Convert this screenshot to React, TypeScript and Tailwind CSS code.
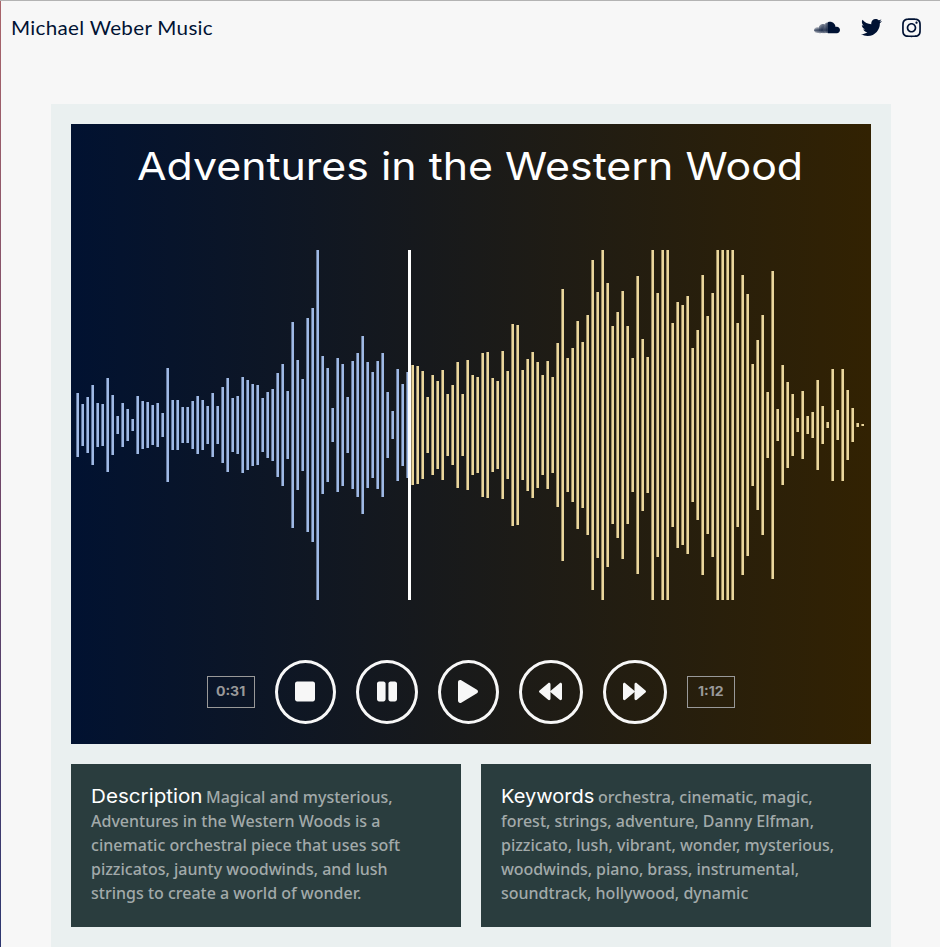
import React from "react";
import {
  FaBackward,
  FaForward,
  FaInstagram,
  FaPause,
  FaPlay,
  FaSoundcloud,
  FaStop,
  FaTwitter,
} from "react-icons/fa";

// Half-height of each bar, in pixels, measured from the centre line.
const peaks = [
  32, 21, 28, 40, 22, 21, 47, 30, 9, 22, 16, 6, 29, 24, 23, 20, 22, 12, 57, 25,
  25, 18, 18, 24, 29, 25, 19, 32, 19, 38, 47, 27, 29, 48, 45, 41, 40, 27, 33,
  36, 52, 61, 34, 103, 65, 46, 107, 117, 175, 69, 57, 17, 67, 61, 28, 64, 72,
  89, 63, 53, 64, 72, 33, 14, 56, 41, 53, 60, 59, 54, 28, 50, 44, 55, 31, 40,
  63, 31, 65, 50, 48, 72, 73, 47, 44, 74, 54, 101, 100, 55, 66, 73, 63, 50, 64,
  48, 82, 136, 67, 77, 104, 83, 110, 165, 133, 175, 142, 99, 113, 134, 99, 67,
  149, 86, 68, 175, 132, 175, 175, 102, 123, 120, 129, 77, 95, 150, 109, 132,
  175, 175, 175, 175, 102, 150, 131, 61, 85, 110, 33, 154, 16, 60, 43, 31, 7,
  34, 9, 13, 45, 19, 3, 56, 15, 56, 35, 17, 2, 1,
];
const PLAYED = 67;

function Waveform() {
  return (
    <svg className="block" width="800" height="350" viewBox="0 0 800 350">
      {peaks.map((p, i) => (
        <rect
          key={i}
          x={5.4 + i * 5}
          y={175 - p}
          width={2.6}
          height={p * 2}
          fill={i < PLAYED ? "#9fb9e5" : "#ead69c"}
        />
      ))}
      <rect x="337" y="0" width="3" height="350" fill="#ffffff" />
    </svg>
  );
}

function Control({ label, width, children }: { label: string; width: string; children: React.ReactNode }) {
  return (
    <button
      aria-label={label}
      className={`flex h-16 items-center justify-center rounded-[50%] border-[3px] border-[#f7f7f7] pr-px pb-px text-[#f7f7f7] ${width}`}
    >
      {children}
    </button>
  );
}

function Time({ value }: { value: string }) {
  return (
    <div className="flex h-8 w-12 items-center justify-center border border-[#999] font-['Inter',sans-serif] text-[13px] font-bold text-[#999]">
      <span className="inline-block scale-x-[1.08]">{value}</span>
    </div>
  );
}

function Card({ title, lines }: { title: React.ReactNode; lines: React.ReactNode[] }) {
  return (
    <section className="h-[163px] w-[390px] bg-[#2a3d3e] p-5 font-['Noto_Sans',sans-serif] text-base leading-6 font-medium whitespace-nowrap text-[#a2aaaa]">
      <div className="-mb-px flex h-[26px] items-baseline gap-1 pt-px">
        {title}
        {lines[0]}
      </div>
      {lines.slice(1).map((l, i) => (
        <div key={i} className="h-6">
          {l}
        </div>
      ))}
    </section>
  );
}

export default function App() {
  return (
    <div className="flex h-[947px] overflow-hidden border-t border-[#b3b3b3] bg-[#f7f7f7]">
      <div className="w-px shrink-0 bg-linear-to-b from-[#a9646a] via-[#6b4468] via-55% to-[#2c3670]" />
      <div className="flex-1">
        <header className="flex h-[53px] items-center justify-between pr-[19px] pl-2.5">
          <h1 className="-mt-px origin-left scale-x-[1.03] font-['Lato',sans-serif] text-[20px] tracking-[0.3px] text-[#001233]">
            Michael Weber Music
          </h1>
          <nav className="flex items-center gap-5 text-[#001233]">
            <FaSoundcloud className="mr-px h-[21px] w-[26px]" />
            <FaTwitter className="h-[21px] w-[21px]" />
            <FaInstagram className="h-[21.5px] w-[19px]" />
          </nav>
        </header>
        <main className="mt-[50px] ml-[50px] h-[900px] w-[840px] bg-[#eaf0f0] p-5">
          <section className="flex h-[620px] flex-col bg-linear-to-r/srgb from-[#011231] to-[#322202]">
            <h2 className="mt-[17px] mr-0.5 h-[109px] scale-x-[1.113] text-center font-['Inter',sans-serif] text-[38.5px] leading-[51px] whitespace-nowrap text-white">
              Adventures in the Western Wood
            </h2>
            <Waveform />
            <div className="mt-[60px] flex items-center justify-center gap-5">
              <Time value="0:31" />
              <Control label="Stop" width="w-[61px]"><FaStop className="h-[23px] w-[20px]" /></Control>
              <Control label="Pause" width="w-[62px]"><FaPause className="h-[23px] w-[20px]" /></Control>
              <Control label="Play" width="w-[61px]"><FaPlay className="h-[23px] w-[20px]" /></Control>
              <Control label="Rewind" width="w-16"><FaBackward className="h-[23px] w-[23px]" /></Control>
              <Control label="Forward" width="w-16"><FaForward className="h-[23px] w-[23px]" /></Control>
              <Time value="1:12" />
            </div>
          </section>
          <div className="mt-5 flex gap-5">
            <Card
              title={
                <h3 className="w-[111px] font-['Inter',sans-serif] text-[19px] font-normal text-white">
                  <span className="inline-block origin-left scale-x-[1.085]">Description</span>
                </h3>
              }
              lines={[
                <span>Magical and mysterious,</span>,
                <span>Adventures in the Western Woods is a</span>,
                <span className="tracking-[0.03px]">cinematic orchestral piece that uses soft</span>,
                <span>pizzicatos, jaunty woodwinds, and lush</span>,
                <span>strings to create a world of wonder.</span>,
              ]}
            />
            <Card
              title={
                <h3 className="w-[93px] font-['Inter',sans-serif] text-[19px] font-normal text-white">
                  <span className="inline-block origin-left scale-x-[1.055]">Keywords</span>
                </h3>
              }
              lines={[
                <span>orchestra, cinematic, magic,</span>,
                <span>forest, strings, adventure, Danny Elfman,</span>,
                <span>pizzicato, lush, vibrant, wonder, mysterious,</span>,
                <span className="tracking-[-0.07px]">woodwinds, piano, brass, instrumental,</span>,
                <span>soundtrack, hollywood, dynamic</span>,
              ]}
            />
          </div>
        </main>
      </div>
    </div>
  );
}
